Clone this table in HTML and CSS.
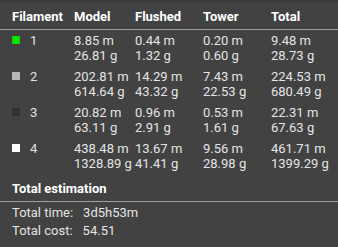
FILE: index.html
```html
<!DOCTYPE html>
<html>
<head>
<meta charset="utf-8">
<link rel="stylesheet" href="styles.css">
</head>
<body>
<div class="panel">
  <div class="topbar"></div>
  <div class="grid header">
    <div>Filament</div><div>Model</div><div>Flushed</div><div>Tower</div><div>Total</div>
  </div>
  <div class="rows">
    <div class="grid row">
      <div class="fil"><span class="sw" style="background:#00e000"></span>1</div>
      <div>8.85 m<br>26.81 g</div><div>0.44 m<br>1.32 g</div><div>0.20 m<br>0.60 g</div><div>9.48 m<br>28.73 g</div>
    </div>
    <div class="grid row">
      <div class="fil"><span class="sw" style="background:#b4b4b4"></span>2</div>
      <div>202.81 m<br>614.64 g</div><div>14.29 m<br>43.32 g</div><div>7.43 m<br>22.53 g</div><div>224.53 m<br>680.49 g</div>
    </div>
    <div class="grid row">
      <div class="fil"><span class="sw" style="background:#323232"></span>3</div>
      <div>20.82 m<br>63.11 g</div><div>0.96 m<br>2.91 g</div><div>0.53 m<br>1.61 g</div><div>22.31 m<br>67.63 g</div>
    </div>
    <div class="grid row">
      <div class="fil"><span class="sw" style="background:#ffffff"></span>4</div>
      <div>438.48 m<br>1328.89 g</div><div>13.67 m<br>41.41 g</div><div>9.56 m<br>28.98 g</div><div>461.71 m<br>1399.29 g</div>
    </div>
  </div>
  <div class="est-title">Total estimation</div>
  <div class="est">
    <div class="line"><span>Total time:</span><span>3d5h53m</span></div>
    <div class="line"><span>Total cost:</span><span>54.51</span></div>
  </div>
</div>
</body>
</html>
```
FILE: styles.css
```css
html, body {
  margin: 0;
  padding: 0;
  background: #424242;
}
.panel {
  width: 338px;
  height: 247px;
  background: #424242;
  font-family: Roboto, "Liberation Sans", sans-serif;
  font-size: 13px;
  color: #e4e4e4;
  overflow: hidden;
}
.topbar {
  height: 2px;
  background: #3a3a3e;
}
.grid {
  display: grid;
  grid-template-columns: 62px 61px 68px 68px 1fr;
  padding-left: 12px;
  white-space: nowrap;
}
.header {
  font-weight: bold;
  color: #ffffff;
  line-height: 14px;
  padding-top: 8px;
  padding-bottom: 5px;
  border-bottom: 1px solid #a0a0a0;
}
.rows {
  display: flex;
  flex-direction: column;
  gap: 7px;
  padding-top: 4px;
}
.row {
  line-height: 14.5px;
}
.fil {
  display: flex;
  align-items: flex-start;
}
.sw {
  width: 8px;
  height: 8px;
  margin-top: 2px;
  margin-right: 10px;
}
.est-title {
  font-weight: bold;
  color: #ffffff;
  line-height: 14px;
  padding: 11px 0 5px 12px;
  border-bottom: 1px solid #a0a0a0;
}
.est {
  padding: 2px 0 0 12px;
}
.line {
  display: flex;
  gap: 10px;
  line-height: 18px;
}
```
